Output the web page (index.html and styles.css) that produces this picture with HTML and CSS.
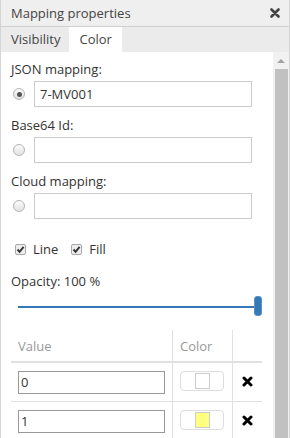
FILE: index.html
```html
<!DOCTYPE html>
<html>
<head>
  <title>Mapping properties</title>
  <link rel="stylesheet" href="styles.css">
</head>
<body>
  <div class="panel">
    <div class="panel-header">
      <span class="panel-title">Mapping properties</span>
      <svg class="close-icon" width="10" height="10" viewBox="0 0 10 10"><path d="M1.5 1.5 L8.5 8.5 M8.5 1.5 L1.5 8.5" stroke="#444" stroke-width="2.6" stroke-linecap="round"/></svg>
    </div>
    <div class="tabs">
      <div class="tab">Visibility</div>
      <div class="tab active">Color</div>
    </div>
    <div class="panel-body">
      <div class="content">
        <div class="field">
          <label class="field-label">JSON mapping:</label>
          <div class="field-row">
            <span class="radio checked"></span>
            <input class="text-input" type="text" value="7-MV001">
          </div>
        </div>
        <div class="field">
          <label class="field-label">Base64 Id:</label>
          <div class="field-row">
            <span class="radio"></span>
            <input class="text-input" type="text">
          </div>
        </div>
        <div class="field">
          <label class="field-label">Cloud mapping:</label>
          <div class="field-row">
            <span class="radio"></span>
            <input class="text-input" type="text">
          </div>
        </div>

        <div class="checks">
          <label class="check"><span class="checkbox"><svg width="9" height="9" viewBox="0 0 9 9"><path d="M1.5 4.5 L3.6 6.8 L7.6 1.8" fill="none" stroke="#333" stroke-width="1.9"/></svg></span>Line</label>
          <label class="check"><span class="checkbox"><svg width="9" height="9" viewBox="0 0 9 9"><path d="M1.5 4.5 L3.6 6.8 L7.6 1.8" fill="none" stroke="#333" stroke-width="1.9"/></svg></span>Fill</label>
        </div>

        <div class="opacity-label">Opacity: 100 %</div>
        <div class="slider">
          <div class="slider-track"></div>
          <div class="slider-handle"></div>
        </div>

        <table class="color-table">
          <thead>
            <tr><th class="col-value">Value</th><th class="col-color">Color</th><th class="col-del"></th></tr>
          </thead>
          <tbody>
            <tr>
              <td><input class="value-input" type="text" value="0"></td>
              <td><span class="swatch-btn"><span class="swatch" style="background:#ffffff"></span></span></td>
              <td class="del"><svg width="11" height="11" viewBox="0 0 11 11"><path d="M2 2 L9 9 M9 2 L2 9" stroke="#000" stroke-width="3" stroke-linecap="round"/></svg></td>
            </tr>
            <tr>
              <td><input class="value-input" type="text" value="1"></td>
              <td><span class="swatch-btn"><span class="swatch" style="background:#ffff80"></span></span></td>
              <td class="del"><svg width="11" height="11" viewBox="0 0 11 11"><path d="M2 2 L9 9 M9 2 L2 9" stroke="#000" stroke-width="3" stroke-linecap="round"/></svg></td>
            </tr>
          </tbody>
        </table>
      </div>
      <div class="scrollbar">
        <div class="scroll-arrow"></div>
        <div class="scroll-thumb"></div>
      </div>
    </div>
  </div>
</body>
</html>
```

FILE: styles.css
```css
body {
  margin: 0;
  font-family: 'Open Sans', 'Liberation Sans', sans-serif;
  color: #333;
  background: #fff;
}
.panel {
  width: 290px;
  height: 438px;
  box-sizing: border-box;
  border-left: 1px solid #d4d4d4;
  border-right: 1px solid #d4d4d4;
  display: flex;
  flex-direction: column;
  overflow: hidden;
}
.panel-header {
  height: 26px;
  flex: none;
  background: #efefef;
  border-bottom: 1px solid #d0d0d0;
  display: flex;
  align-items: center;
  justify-content: space-between;
  padding: 0 9px 0 10px;
}
.panel-title {
  font-size: 13px;
  color: #444;
}
.tabs {
  height: 25px;
  flex: none;
  background: #ebebeb;
  display: flex;
}
.tab {
  padding: 0 9px 0 10px;
  line-height: 25px;
  font-size: 13px;
  color: #444;
}
.tab.active {
  background: #fff;
  padding: 0 10px;
}
.panel-body {
  flex: 1;
  display: flex;
  min-height: 0;
}
.content {
  flex: 1;
  padding: 8px 10px 0 10px;
}
.field {
  margin-bottom: 9px;
}
.field-label {
  display: block;
  font-size: 13px;
  line-height: 18px;
  margin-bottom: 3px;
}
.field-row {
  display: flex;
  align-items: center;
}
.radio {
  width: 10px;
  height: 10px;
  border: 1px solid #b5b5b5;
  border-radius: 50%;
  background: linear-gradient(#fafafa, #e2e2e2);
  margin: 0 9px 0 2px;
  position: relative;
  flex: none;
}
.radio.checked::after {
  content: '';
  position: absolute;
  left: 2.5px;
  top: 2.5px;
  width: 5px;
  height: 5px;
  border-radius: 50%;
  background: #555;
}
.text-input {
  width: 218px;
  height: 26px;
  box-sizing: border-box;
  border: 1px solid #ccc;
  padding: 0 5px;
  font-family: inherit;
  font-size: 13px;
  color: #333;
  outline: none;
}
.checks {
  display: flex;
  gap: 13px;
  margin: 21px 0 0 4px;
}
.check {
  display: flex;
  align-items: center;
  font-size: 13px;
}
.checkbox {
  width: 9px;
  height: 9px;
  border: 1px solid #a8a8a8;
  border-radius: 2px;
  background: #eee;
  display: flex;
  margin-right: 7px;
}
.opacity-label {
  font-size: 13px;
  margin-top: 14px;
}
.slider {
  position: relative;
  height: 22px;
  margin: 6px 0 0 7px;
  width: 244px;
}
.slider-track {
  position: absolute;
  left: 0;
  right: 5px;
  top: 10px;
  height: 2px;
  background: #337ab7;
}
.slider-handle {
  position: absolute;
  right: 0;
  top: 0;
  width: 8px;
  height: 20px;
  border-radius: 3px;
  background: #337ab7;
  border: 1px solid #5b93c4;
  box-sizing: border-box;
}
.color-table {
  border-collapse: collapse;
  width: 251px;
  margin-top: 12px;
  font-size: 13px;
}
.color-table th {
  font-weight: normal;
  color: #999;
  text-align: left;
  height: 31px;
  padding: 0 7px;
  border-bottom: 2px solid #e0e0e0;
}
.color-table td {
  height: 38px;
  padding: 0 7px;
  border-bottom: 1px solid #e0e0e0;
}
.color-table th + th,
.color-table td + td {
  border-left: 1px solid #e0e0e0;
}
.col-value {
  width: 147px;
}
.col-color {
  width: 45px;
}
.value-input {
  width: 147px;
  height: 23px;
  box-sizing: border-box;
  border: 1px solid #999;
  padding: 0 2px;
  font-family: inherit;
  font-size: 13px;
  color: #333;
}
.swatch-btn {
  display: flex;
  justify-content: center;
  align-items: center;
  width: 44px;
  height: 20px;
  box-sizing: border-box;
  border: 1px solid #ddd;
  border-radius: 4px;
  margin-bottom: 3px;
}
.swatch {
  width: 15px;
  height: 16px;
  box-sizing: border-box;
  border: 1px solid #ccc;
}
.del {
  text-align: center;
}
.scrollbar {
  width: 16px;
  flex: none;
  background: #f1f1f1;
  display: flex;
  flex-direction: column;
  align-items: center;
}
.scroll-arrow {
  width: 0;
  height: 0;
  border-left: 4px solid transparent;
  border-right: 4px solid transparent;
  border-bottom: 4px solid #a3a3a3;
  margin: 7px 0 6px;
}
.scroll-thumb {
  width: 13px;
  flex: 1;
  background: #c1c1c1;
}
```
